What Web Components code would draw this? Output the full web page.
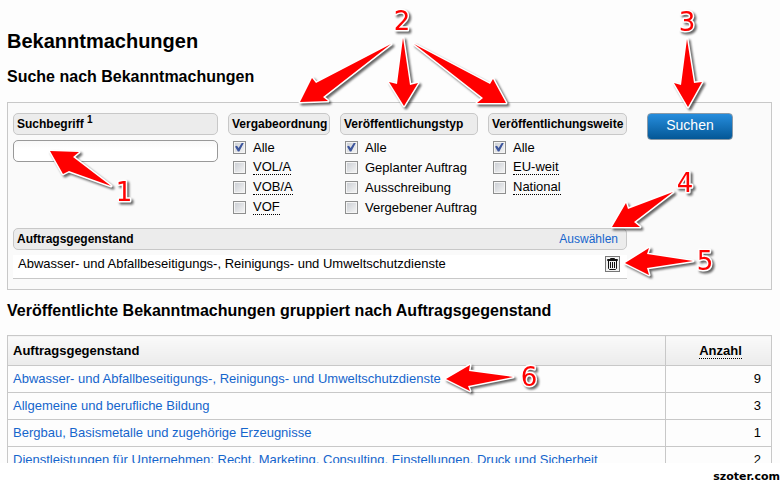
<!DOCTYPE html>
<html lang="de">
<head>
<meta charset="utf-8">
<meta name="viewport" content="width=device-width, initial-scale=1">
<title>Bekanntmachungen</title>
<style>
    :root {
        --line: #c8c8c8;
        --link: #1565cc;
        --bar: #ececec;
    }
    body {
        margin: 0;
        background: #fff;
        color: #000;
        font: 13px/20px "Liberation Sans", Arial, sans-serif;
    }
</style>
</head>
<body>
<notice-page></notice-page>

<template id="page-template">
<style>
    * { box-sizing: border-box; }
    :host {
        display: flex;
        flex-direction: column;
        height: 100vh;
        position: relative;
        overflow: hidden;
    }
    main {
        flex: 1;
        min-height: 0;
        overflow: hidden;
        padding: 28px 8px 0 7px;
        background: #fdfdfd;
    }
    h1, h2 { margin: 0; }
    h1 { font-size: 20px; line-height: 26px; }
    h2 { font-size: 16px; line-height: 20px; margin: 13px 0 15px; }
    search-panel + h2 { margin: 11px 0 14px; }
    footer {
        height: 20px;
        padding-top: 8px;
        text-align: right;
        font: bold 11px/12px "DejaVu Sans", sans-serif;
    }
</style>
<main>
    <h1>Bekanntmachungen</h1>
    <h2>Suche nach Bekanntmachungen</h2>
    <search-panel></search-panel>
    <h2>Veröffentlichte Bekanntmachungen gruppiert nach Auftragsgegenstand</h2>
    <result-table></result-table>
</main>
<footer>szoter.com</footer>
<callout-layer></callout-layer>
</template>

<template id="panel-template">
<style>
    * { box-sizing: border-box; }
    :host { display: block; }
    form {
        display: flex;
        gap: 20px;
        padding: 10px 5px;
        border: 1px solid var(--line);
        background: #fafafa;
    }
    .criteria { flex: 1; min-width: 0; }
    .filters {
        display: grid;
        grid-template-columns: 205fr 102fr 138fr 139fr;
        gap: 10px;
        min-height: 105px;
        margin-bottom: 10px;
    }
    .term {
        display: block;
        width: 100%;
        height: 22px;
        margin-top: 5px;
        padding: 0 4px;
        border: 1px solid #999;
        border-radius: 5px;
        background: linear-gradient(#f8f8f8, #fff 8px);
        font: inherit;
    }
    sup { font-size: 10px; line-height: 0; }
    a { color: var(--link); text-decoration: none; font-weight: normal; }
    .chosen {
        display: flex;
        align-items: center;
        justify-content: space-between;
        height: 24px;
        margin-top: 5px;
        padding: 0 7px 6px 5px;
        border-bottom: 1px solid var(--line);
        background: #fff;
    }
    .actions { width: 119px; }
    .search {
        display: block;
        width: 86px;
        height: 27px;
        padding: 0 0 4px;
        border: 1px solid #8a9aa8;
        border-radius: 4px;
        background: linear-gradient(#268ddd, #045796);
        color: #fff;
        font: 14px/20px "Liberation Sans", Arial, sans-serif;
    }
    .delete {
        width: 15px;
        height: 16px;
        padding: 0;
        border: 1px solid #777;
        background: #f2f2f2;
    }
    .delete svg { display: block; }
</style>
<form>
    <div class="criteria">
        <div class="filters">
            <div>
                <label for="term"><title-bar>Suchbegriff <sup>1</sup></title-bar></label>
                <input class="term" id="term" type="text">
            </div>
            <check-group label="Vergabeordnung" options="Alle|VOL/A*|VOB/A*|VOF*"></check-group>
            <check-group label="Veröffentlichungstyp" options="Alle|Geplanter Auftrag|Ausschreibung|Vergebener Auftrag"></check-group>
            <check-group label="Veröffentlichungsweite" options="Alle|EU-weit*|National*"></check-group>
        </div>
        <title-bar>Auftragsgegenstand<a slot="action" href="#auswahl">Auswählen</a></title-bar>
        <div class="chosen">
            <span>Abwasser- und Abfallbeseitigungs-, Reinigungs- und Umweltschutzdienste</span>
            <button class="delete" type="button" aria-label="Entfernen">
                <svg width="13" height="14" viewBox="0 0 13 14" fill="none" stroke="#111">
                    <path d="M4.5 2.5V1.5H8.5V2.5M1.5 3.5V2.5H11.5V3.5ZM2.5 4V11.5L3.5 12.5H9.5L10.5 11.5V4M4.5 5V11M6.5 5V11M8.5 5V11"/>
                </svg>
            </button>
        </div>
    </div>
    <div class="actions"><button class="search" type="button">Suchen</button></div>
</form>
</template>

<template id="bar-template">
<style>
    :host {
        display: flex;
        justify-content: space-between;
        box-sizing: border-box;
        height: 22px;
        padding: 0 8px 0 3px;
        border: 1px solid var(--line);
        border-radius: 5px;
        background: var(--bar);
        font-weight: bold;
        font-size: 12px;
        line-height: 20px;
        white-space: nowrap;
    }
</style>
<span><slot></slot></span>
<slot name="action"></slot>
</template>

<template id="table-template">
<style>
    * { box-sizing: border-box; }
    :host { display: block; }
    table { width: 100%; border-collapse: collapse; }
    th, td { height: 27px; padding: 0 5px; border: 1px solid var(--line); text-align: left; }
    th { height: 30px; background: linear-gradient(#fafafa, #ebebeb); }
    th:last-child { width: 106px; padding-left: 9px; text-align: center; }
    th span { border-bottom: 1px dotted #000; }
    td:last-child { padding-right: 10px; text-align: right; }
    a { color: var(--link); text-decoration: none; }
</style>
<table>
    <thead><tr><th>Auftragsgegenstand</th><th><span>Anzahl</span></th></tr></thead>
    <tbody></tbody>
</table>
</template>

<template id="callout-template">
<style>
    :host { position: absolute; inset: 0; pointer-events: none; }
    svg { display: block; width: 100%; height: 100%; filter: drop-shadow(2px 2px 1px rgba(0, 0, 0, .6)); }
    g { fill: #f00; stroke: #fff; stroke-width: 3px; stroke-linejoin: round; paint-order: stroke; }
    text { font: 26px "DejaVu Sans", sans-serif; text-anchor: middle; }
</style>
<svg>
    <g>
        <path d="M50 151L79 152L73 157L111 186L69 171L63 174Z"/>
        <path d="M300 102L312 78L316 83L391 44L323 97L328 101Z"/>
        <path d="M404 106L389 82L397 84L403 38L410 85L418 83Z"/>
        <path d="M506 103L493 79L490 84L414 44L483 98L477 103Z"/>
        <path d="M688 107L674 83L681 85L687 39L694 83L702 82Z"/>
        <path d="M612 227L626 203L628 209L673 192L634 222L640 227Z"/>
        <path d="M625 263L649 248L647 254L693 261L647 268L649 275Z"/>
        <path d="M446 379L470 365L469 371L513 377L468 386L470 391Z"/>
        <text x="124" y="201">1</text>
        <text x="402" y="30">2</text>
        <text x="687" y="31">3</text>
        <text x="685" y="192">4</text>
        <text x="705" y="270">5</text>
        <text x="529" y="386">6</text>
    </g>
</svg>
</template>

<script>
const render = (el, id) => {
    const root = el.attachShadow({ mode: 'open' })
    root.appendChild(document.getElementById(id).content.cloneNode(true))
    return root
}

class TitleBar extends HTMLElement {
    constructor() {
        super()
        render(this, 'bar-template')
    }
}

class CheckGroup extends HTMLElement {
    connectedCallback() {
        if (this.shadowRoot) return
        const name = this.getAttribute('label')
        // a trailing * marks a term with an explanation
        const rows = this.getAttribute('options').split('|').map((option, i) => {
            const text = option.replace('*', '')
            const label = option.endsWith('*') ? `<span class="term">${text}</span>` : `<span>${text}</span>`
            return `<label><input type="checkbox"${i === 0 ? ' checked' : ''}>${label}</label>`
        })
        this.attachShadow({ mode: 'open' }).innerHTML = `
<style>
    :host { display: block; min-width: 0; }
    .rows { padding: 2px 0 0 5px; }
    label { display: flex; align-items: center; gap: 7px; height: 20px; line-height: 15px; white-space: nowrap; }
    .term { border-bottom: 1px dotted #000; }
    input {
        appearance: none;
        flex: none;
        box-sizing: border-box;
        display: grid;
        place-items: center;
        width: 13px;
        height: 13px;
        margin: 0;
        border: 1px solid #8e8f8f;
        outline: 1px solid #f4f4f4;
        outline-offset: -2px;
        background: linear-gradient(135deg, #c8ccd2, #f6f6f6);
    }
    input:checked::before {
        content: '';
        width: 9px;
        height: 9px;
        background: #3c559c;
        clip-path: polygon(0 45%, 22% 36%, 40% 62%, 78% 0, 100% 0, 48% 100%, 32% 100%);
    }
</style>
<title-bar>${name}</title-bar>
<div class="rows" role="group" aria-label="${name}">${rows.join('')}</div>`
    }
}

class SearchPanel extends HTMLElement {
    constructor() {
        super()
        render(this, 'panel-template')
    }
}

const results = [
    ['Abwasser- und Abfallbeseitigungs-, Reinigungs- und Umweltschutzdienste', 9],
    ['Allgemeine und berufliche Bildung', 3],
    ['Bergbau, Basismetalle und zugehörige Erzeugnisse', 1],
    ['Dienstleistungen für Unternehmen: Recht, Marketing, Consulting, Einstellungen, Druck und Sicherheit', 2],
]

class ResultTable extends HTMLElement {
    constructor() {
        super()
        const root = render(this, 'table-template')
        root.querySelector('tbody').innerHTML = results
            .map(([title, count]) => `<tr><td><a href="#liste">${title}</a></td><td>${count}</td></tr>`)
            .join('')
    }
}

class CalloutLayer extends HTMLElement {
    constructor() {
        super()
        render(this, 'callout-template')
    }
}

class NoticePage extends HTMLElement {
    constructor() {
        super()
        render(this, 'page-template')
    }
}

customElements.define('title-bar', TitleBar)
customElements.define('check-group', CheckGroup)
customElements.define('search-panel', SearchPanel)
customElements.define('result-table', ResultTable)
customElements.define('callout-layer', CalloutLayer)
customElements.define('notice-page', NoticePage)
</script>
</body>
</html>
